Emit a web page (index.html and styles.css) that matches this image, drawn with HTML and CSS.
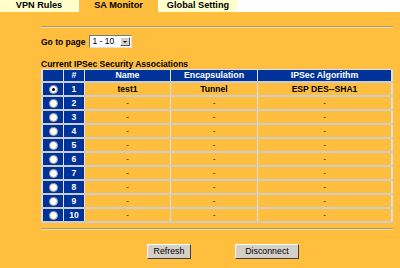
FILE: index.html
```html
<!DOCTYPE html>
<html lang="en">

<head>
    <meta charset="UTF-8">
    <title>SA Monitor</title>
    <link rel="stylesheet" href="styles.css">
</head>

<body>
    <div class="tabs">
        <div class="tab">VPN Rules</div>
        <div class="tab active">SA Monitor</div>
        <div class="tab">Global Setting</div>
    </div>
    <div class="content">
        <div class="rule"></div>
        <div class="pager">
            Go to page
            <span class="select"><span class="value">1 - 10</span><span class="arrow"></span></span>
        </div>
        <div class="caption">Current IPSec Security Associations</div>
        <table class="sa">
            <tr>
                <th class="c-radio"></th>
                <th class="c-num">#</th>
                <th class="c-name">Name</th>
                <th class="c-enc">Encapsulation</th>
                <th>IPSec Algorithm</th>
            </tr>
            <tr>
                <td class="blue"><span class="radio checked"></span></td>
                <td class="blue">1</td>
                <td>test1</td>
                <td>Tunnel</td>
                <td>ESP DES--SHA1</td>
            </tr>
            <tr><td class="blue"><span class="radio"></span></td><td class="blue">2</td><td class="dash">-</td><td class="dash">-</td><td class="dash">-</td></tr>
            <tr><td class="blue"><span class="radio"></span></td><td class="blue">3</td><td class="dash">-</td><td class="dash">-</td><td class="dash">-</td></tr>
            <tr><td class="blue"><span class="radio"></span></td><td class="blue">4</td><td class="dash">-</td><td class="dash">-</td><td class="dash">-</td></tr>
            <tr><td class="blue"><span class="radio"></span></td><td class="blue">5</td><td class="dash">-</td><td class="dash">-</td><td class="dash">-</td></tr>
            <tr><td class="blue"><span class="radio"></span></td><td class="blue">6</td><td class="dash">-</td><td class="dash">-</td><td class="dash">-</td></tr>
            <tr><td class="blue"><span class="radio"></span></td><td class="blue">7</td><td class="dash">-</td><td class="dash">-</td><td class="dash">-</td></tr>
            <tr><td class="blue"><span class="radio"></span></td><td class="blue">8</td><td class="dash">-</td><td class="dash">-</td><td class="dash">-</td></tr>
            <tr><td class="blue"><span class="radio"></span></td><td class="blue">9</td><td class="dash">-</td><td class="dash">-</td><td class="dash">-</td></tr>
            <tr><td class="blue"><span class="radio"></span></td><td class="blue">10</td><td class="dash">-</td><td class="dash">-</td><td class="dash">-</td></tr>
        </table>
        <div class="rule bottom"></div>
        <div class="actions">
            <button class="btn refresh">Refresh</button>
            <button class="btn disconnect">Disconnect</button>
        </div>
    </div>
</body>

</html>
```

FILE: styles.css
```css
body {
    margin: 0;
    height: 268px;
    background: #ffbe3d;
    font-family: "Liberation Sans", Arial, sans-serif;
    font-size: 8.5px;
    color: #000;
}

.tabs {
    display: flex;
    height: 12px;
    background: #fff;
}

.tab {
    width: 78px;
    margin-right: 1px;
    background: #ffffcc;
    font-weight: bold;
    font-size: 9.2px;
    line-height: 11px;
    text-align: center;
}

.tab.active {
    width: 79px;
    background: #ffbe3d;
}

.content {
    padding: 14px 7px 0 41px;
}

.rule {
    height: 1px;
    background: #a09a90;
    border-bottom: 1px solid #ffd98a;
}

.pager {
    display: flex;
    align-items: center;
    gap: 4px;
    margin-top: 7px;
    font-weight: bold;
    height: 13px;
    white-space: nowrap;
}

.select {
    display: flex;
    align-items: center;
    width: 41px;
    height: 11px;
    background: #fff;
    border: 1px solid #7a7a7a;
    border-right-color: #e0e0e0;
    border-bottom-color: #e0e0e0;
    font-weight: normal;
    font-size: 8.5px;
}

.select .value {
    flex: 1;
    padding-left: 2px;
    line-height: 11px;
}

.select .arrow {
    position: relative;
    width: 10px;
    height: 9px;
    margin-right: 1px;
    background: #d4d0c8;
    border: 1px solid #fff;
    border-right-color: #555;
    border-bottom-color: #555;
    box-sizing: border-box;
}

.select .arrow::after {
    content: "";
    position: absolute;
    left: 2px;
    top: 3px;
    border-left: 2px solid transparent;
    border-right: 2px solid transparent;
    border-top: 2px solid #000;
}

.caption {
    margin-top: 12px;
    font-weight: bold;
    line-height: 9px;
    height: 9px;
}

.sa {
    width: 352px;
    border-collapse: collapse;
    border: 2px solid #dedede;
    border-top: 0;
}

.sa th,
.sa td {
    border: 1px solid #e2e2e2;
    border-bottom: 2px solid #cdcdcd;
    padding: 0;
    text-align: center;
    font-weight: bold;
    font-size: 8.6px;
}

.sa th {
    height: 11px;
    line-height: 11px;
    background: #003399;
    color: #fff;
    font-size: 8.8px;
}

.sa td {
    height: 12px;
    line-height: 12px;
}

.sa .c-radio {
    width: 20px;
}

.sa .c-num {
    width: 20px;
}

.sa .c-name {
    width: 85px;
}

.sa .c-enc {
    width: 86px;
}

.sa td.blue {
    background: #003399;
    color: #fff;
}

.sa td.dash {
    font-weight: normal;
    font-size: 8px;
}

.radio {
    display: inline-block;
    width: 7px;
    height: 7px;
    border-radius: 50%;
    background: #fff;
    border: 1px solid #9a9a9a;
    vertical-align: middle;
    position: relative;
}

.radio.checked::after {
    content: "";
    position: absolute;
    left: 2px;
    top: 2px;
    width: 3px;
    height: 3px;
    border-radius: 50%;
    background: #000;
}

.rule.bottom {
    margin-top: 5px;
}

.actions {
    display: flex;
    gap: 44px;
    margin-top: 14px;
    padding-left: 106px;
}

.btn {
    height: 15px;
    padding: 0;
    background: #d4d0c8;
    border: 1px solid #fff;
    border-right-color: #404040;
    border-bottom-color: #404040;
    font-family: "Liberation Sans", Arial, sans-serif;
    font-size: 8.8px;
    line-height: 13px;
    color: #000;
}

.refresh {
    width: 44px;
}

.disconnect {
    width: 64px;
}
```
